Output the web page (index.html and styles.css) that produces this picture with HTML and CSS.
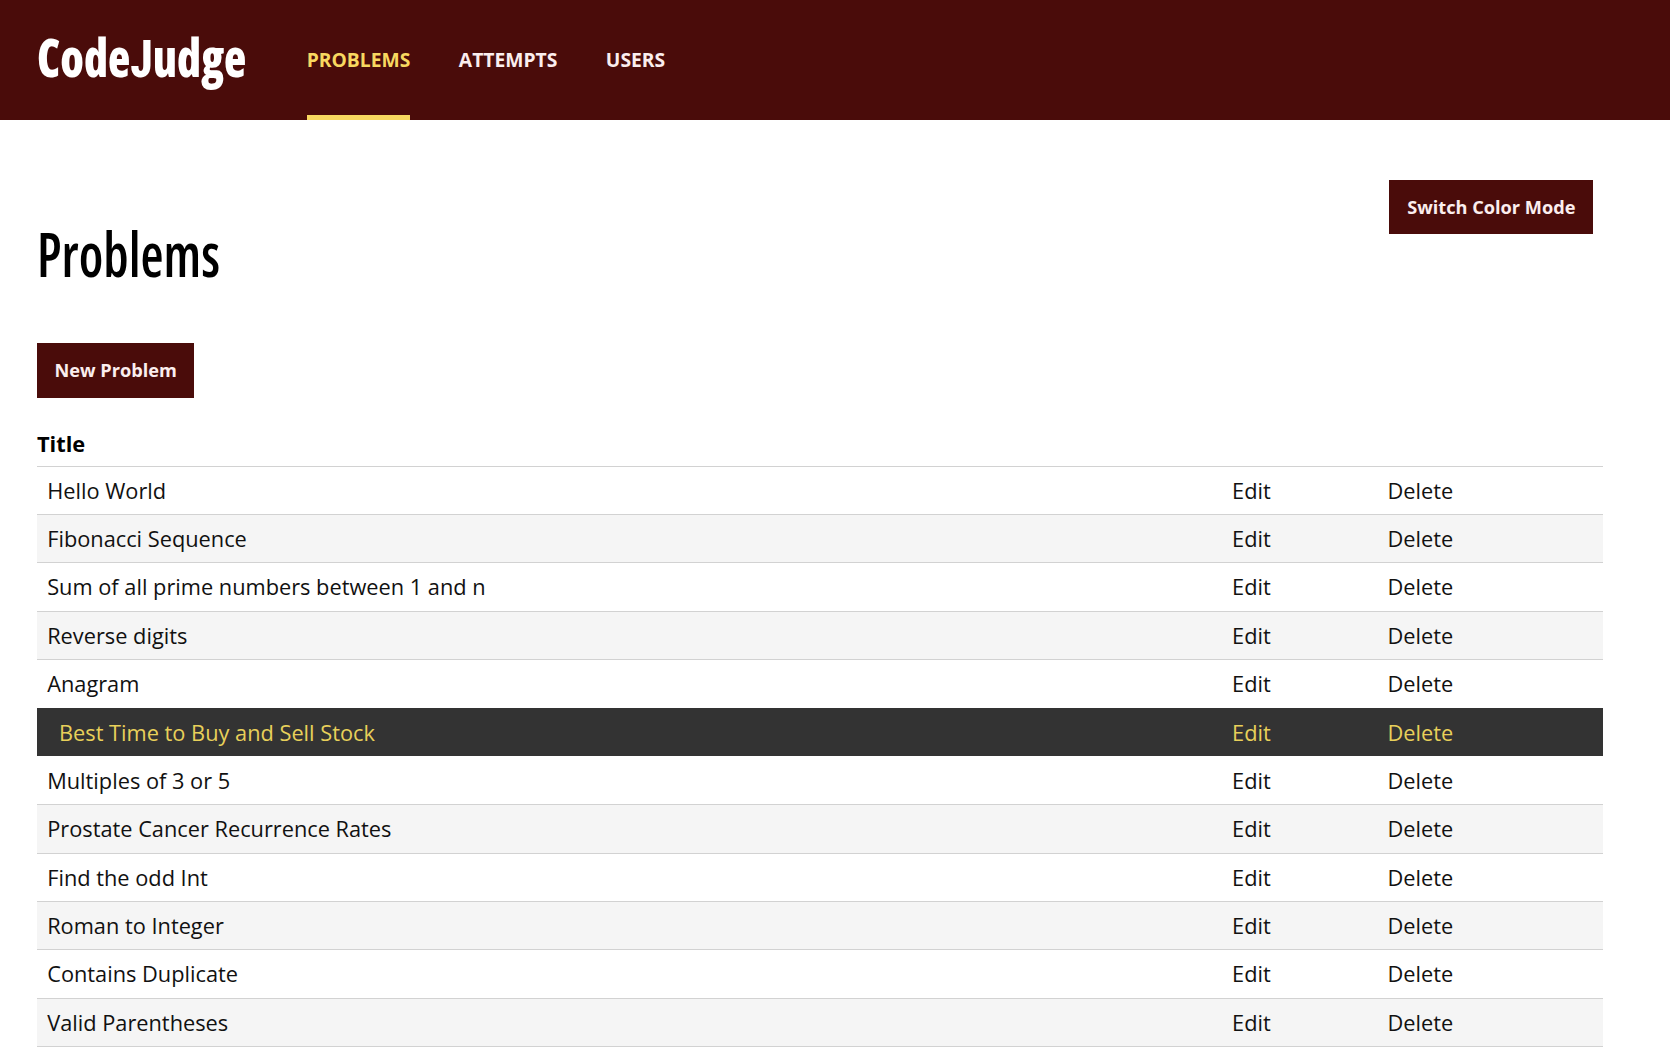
FILE: index.html
```
<!DOCTYPE html>
<html lang="en">
<head>
<meta charset="utf-8">
<title>CodeJudge</title>
<link rel="stylesheet" href="styles.css">
</head>
<body>
<header class="header">
  <a class="logo">Code<span class="logo-j">J</span>udge</a>
  <nav class="nav">
    <a class="nav-link active">PROBLEMS</a>
    <a class="nav-link">ATTEMPTS</a>
    <a class="nav-link">USERS</a>
  </nav>
</header>
<main class="main">
  <div class="top">
    <h1 class="heading">Problems</h1>
    <button class="button switch">Switch Color Mode</button>
  </div>
  <button class="button">New Problem</button>
  <div class="table">
    <div class="table-head">Title</div>
    <div class="row"><span>Hello World</span><a>Edit</a><a>Delete</a></div>
    <div class="row"><span>Fibonacci Sequence</span><a>Edit</a><a>Delete</a></div>
    <div class="row"><span>Sum of all prime numbers between 1 and n</span><a>Edit</a><a>Delete</a></div>
    <div class="row"><span>Reverse digits</span><a>Edit</a><a>Delete</a></div>
    <div class="row"><span>Anagram</span><a>Edit</a><a>Delete</a></div>
    <div class="row selected"><span>Best Time to Buy and Sell Stock</span><a>Edit</a><a>Delete</a></div>
    <div class="row"><span>Multiples of 3 or 5</span><a>Edit</a><a>Delete</a></div>
    <div class="row"><span>Prostate Cancer Recurrence Rates</span><a>Edit</a><a>Delete</a></div>
    <div class="row"><span>Find the odd Int</span><a>Edit</a><a>Delete</a></div>
    <div class="row"><span>Roman to Integer</span><a>Edit</a><a>Delete</a></div>
    <div class="row"><span>Contains Duplicate</span><a>Edit</a><a>Delete</a></div>
    <div class="row"><span>Valid Parentheses</span><a>Edit</a><a>Delete</a></div>
    <div class="row"></div>
  </div>
</main>
</body>
</html>
```
FILE: styles.css
```
* { box-sizing: border-box; }
body {
  margin: 0;
  height: 1062px;
  overflow: hidden;
  background: #fff;
  color: #111;
  font-family: "Open Sans", sans-serif;
  font-size: 21.77px;
}
.header {
  display: flex;
  height: 119.5px;
  padding-left: 37px;
  background: #4a0c0a;
  color: #fff;
}
.logo {
  width: 269.7px;
  font-size: 52.5px;
  font-weight: 800;
  font-stretch: 75%;
  line-height: 114px;
  white-space: nowrap;
  transform: scaleX(.875);
  transform-origin: left;
}
.logo-j {
  font-family: Roboto, sans-serif;
  font-weight: 800;
}
.nav { display: flex; gap: 48.5px; }
.nav-link {
  font-size: 19.3px;
  font-weight: 700;
  line-height: 119px;
  height: 119.5px;
  color: #fbeeee;
}
.nav-link.active {
  color: #f8d860;
  border-bottom: 5px solid #f8d860;
}
.main { padding: 60.5px 67px 0 37px; }
.top {
  display: flex;
  justify-content: space-between;
  align-items: flex-start;
  height: 163.2px;
  padding-right: 9.7px;
}
.heading {
  margin: 32px 0 0;
  font-size: 60.5px;
  font-weight: 600;
  font-stretch: 75%;
  line-height: 84px;
  color: #000;
  transform: scaleX(.875);
  transform-origin: left;
}
.button {
  display: block;
  height: 54.4px;
  padding: 0 17.4px;
  border: 0;
  background: #4a0c0a;
  color: #fbeeee;
  font: 700 18.2px "Open Sans", sans-serif;
}
.switch { padding: 0 17.8px; }
.table-head {
  height: 68px;
  padding-top: 31px;
  font-weight: 700;
  line-height: 30px;
  color: #000;
}
.row {
  display: grid;
  grid-template-columns: 1184.9px 155.5px 1fr;
  height: 48.4px;
  border-top: 1px solid #d2d2d2;
  line-height: 47px;
}
.row > * { padding-left: 10.2px; }
.row:nth-child(odd) { background: #f5f5f5; }
.row.selected {
  background: #333;
  border-top-color: #333;
  color: #e8d05a;
}
.row.selected span { padding-left: 22px; }
.row.selected + .row { background: #fff; border-top-color: #fff; }
.row:last-child { background: #fff; }
```
